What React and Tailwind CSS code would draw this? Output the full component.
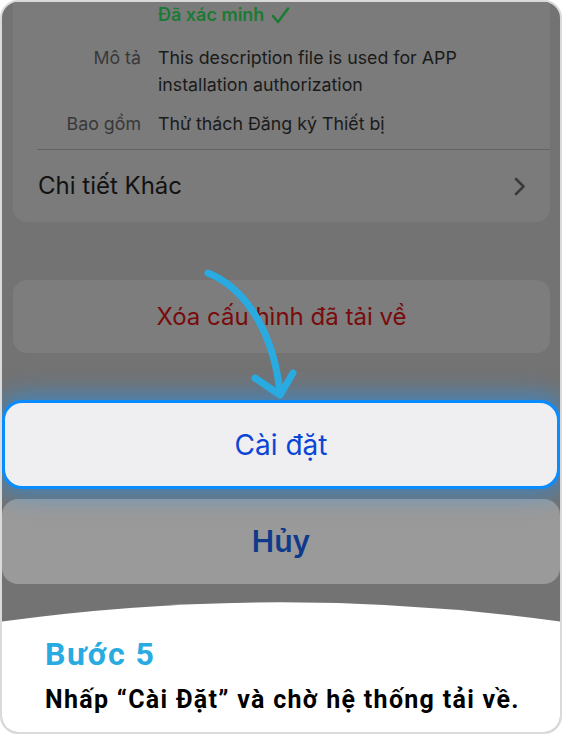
import React from "react";

export default function App() {
  return (
    <div className="w-[562px] h-[734px] bg-white">
      <div className="relative w-[562px] h-[734px] rounded-[18px] border-2 border-[#dadada] overflow-hidden bg-[#737373] flex flex-col font-['Inter',sans-serif]">
        {/* Profile card */}
        <div className="ml-[11px] mr-[10px] bg-[#7b7b7b] rounded-b-[14px] flex flex-col">
          <div className="pt-[1px] pl-[145px] text-[18px] leading-[24px] font-semibold text-[#1b7a34] flex items-center gap-[7px]">
            <span>Đã xác minh</span>
            <svg width="19" height="17" viewBox="0 0 19 17" fill="none">
              <path d="M2 9 L7 15 L17 1.5" stroke="#1b7a34" strokeWidth="2.5" strokeLinecap="round" strokeLinejoin="round" />
            </svg>
          </div>
          <div className="mt-[17px] flex text-[17.8px] leading-[27px]">
            <div className="w-[128px] shrink-0 text-right text-[#383838]">Mô tả</div>
            <div className="ml-[17px] text-[#1a1a1a]">
              This description file is used for APP
              <br />
              installation authorization
            </div>
          </div>
          <div className="mt-[12px] flex text-[17.8px] leading-[27px]">
            <div className="w-[128px] shrink-0 text-right text-[#383838]">Bao gồm</div>
            <div className="ml-[17px] text-[#1a1a1a]">Thử thách Đăng ký Thiết bị</div>
          </div>
          <div className="mt-[12px] ml-[24px] h-px bg-[#626262]" />
          <div className="h-[72px] flex items-center justify-between pl-[25px] pr-[24px]">
            <span className="text-[24px] text-[#121212]">Chi tiết Khác</span>
            <svg width="12" height="19" viewBox="0 0 12 19" fill="none">
              <path d="M2 2 L9.5 9.5 L2 17" stroke="#3a3a3a" strokeWidth="2.6" strokeLinecap="round" strokeLinejoin="round" />
            </svg>
          </div>
        </div>

        {/* Remove downloaded profile */}
        <div className="mt-[58px] ml-[11px] mr-[10px] h-[73px] rounded-[14px] bg-[#7d7d7d] flex items-center justify-center">
          <span className="text-[24px] text-[#780b0b]">Xóa cấu hình đã tải về</span>
        </div>

        {/* Install button */}
        <div className="mt-[47px] h-[89px] rounded-[20px] border-[3px] border-[#0a8cff] bg-[#efeff1] shadow-[0_0_22px_6px_rgba(20,150,255,0.5)] flex items-center justify-center relative z-10">
          <span className="text-[28px] text-[#0c45d6]">Cài đặt</span>
        </div>

        {/* Cancel */}
        <div className="mt-[10px] h-[85px] rounded-[16px] bg-[#9a9a9a] flex items-center justify-center">
          <span className="text-[30px] font-semibold text-[#0f3a8c]">Hủy</span>
        </div>

        {/* Bottom caption */}
        <div className="mt-[18px] flex-1 flex flex-col">
          <svg className="block" width="558" height="20" viewBox="0 0 558 20" preserveAspectRatio="none">
            <path d="M0 19.5 Q279 -19 558 19.5 L558 20 L0 20 Z" fill="#ffffff" />
          </svg>
          <div className="flex-1 bg-white pl-[43px] pt-[13px] font-['Roboto',sans-serif]">
            <div className="text-[32px] leading-[38px] font-bold tracking-[1.5px] text-[#29abe2]">Bước 5</div>
            <div className="mt-[12px] text-[25px] leading-[30px] font-bold tracking-[1.3px] text-black">
              Nhấp “Cài Đặt” và chờ hệ thống tải về.
            </div>
          </div>
        </div>

        {/* Arrow overlay */}
        <svg className="absolute left-[-2px] top-[-2px] z-20 pointer-events-none" width="562" height="734" viewBox="0 0 562 734" fill="none">
          <path d="M208 273 C250 290 275 340 280 394" stroke="#29abe2" strokeWidth="7" strokeLinecap="round" />
          <path d="M255 378 L280 395 L293 373" stroke="#29abe2" strokeWidth="7" strokeLinecap="round" strokeLinejoin="round" />
        </svg>
      </div>
    </div>
  );
}
